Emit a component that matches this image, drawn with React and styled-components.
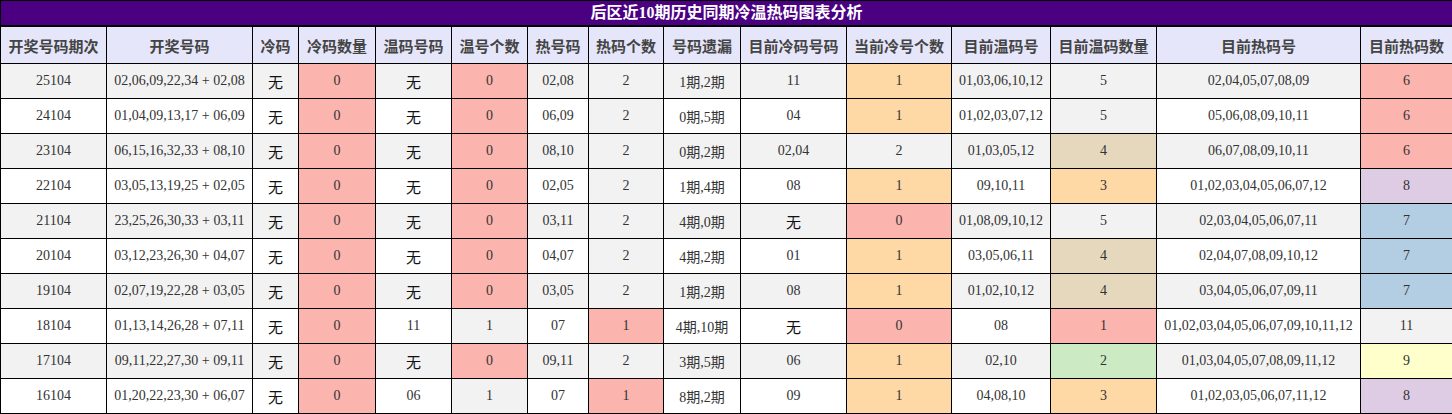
import styled, { createGlobalStyle } from "styled-components";

const GlobalStyle = createGlobalStyle`
  body {
    margin: 0;
    background: #ffffff;
    font-family: "Liberation Serif", "Noto Sans CJK SC", serif;
  }
`;

const palette = {
  red: "#fbb4ae",
  blue: "#b3cde3",
  green: "#ccebc5",
  purple: "#decbe4",
  orange: "#fed9a6",
  yellow: "#ffffcc",
  tan: "#e5d8bd",
  gray: "#f2f2f2",
};

const columns = [
  { title: "开奖号码期次", width: 106 },
  { title: "开奖号码", width: 146 },
  { title: "冷码", width: 46 },
  { title: "冷码数量", width: 77 },
  { title: "温码号码", width: 76 },
  { title: "温号个数", width: 76 },
  { title: "热号码", width: 61 },
  { title: "热码个数", width: 75 },
  { title: "号码遗漏", width: 77 },
  { title: "目前冷码号码", width: 106 },
  { title: "当前冷号个数", width: 105 },
  { title: "目前温码号", width: 99 },
  { title: "目前温码数量", width: 106 },
  { title: "目前热码号", width: 204 },
  { title: "目前热码数", width: 92 },
];

// count columns carry a colour key: [value, colour]
const rows = [
  ["25104", "02,06,09,22,34 + 02,08", "无", ["0", "red"], "无", ["0", "red"], "02,08", ["2", "gray"], "1期,2期", "11", ["1", "orange"], "01,03,06,10,12", ["5", "gray"], "02,04,05,07,08,09", ["6", "red"]],
  ["24104", "01,04,09,13,17 + 06,09", "无", ["0", "red"], "无", ["0", "red"], "06,09", ["2", "gray"], "0期,5期", "04", ["1", "orange"], "01,02,03,07,12", ["5", "gray"], "05,06,08,09,10,11", ["6", "red"]],
  ["23104", "06,15,16,32,33 + 08,10", "无", ["0", "red"], "无", ["0", "red"], "08,10", ["2", "gray"], "0期,2期", "02,04", ["2", "gray"], "01,03,05,12", ["4", "tan"], "06,07,08,09,10,11", ["6", "red"]],
  ["22104", "03,05,13,19,25 + 02,05", "无", ["0", "red"], "无", ["0", "red"], "02,05", ["2", "gray"], "1期,4期", "08", ["1", "orange"], "09,10,11", ["3", "orange"], "01,02,03,04,05,06,07,12", ["8", "purple"]],
  ["21104", "23,25,26,30,33 + 03,11", "无", ["0", "red"], "无", ["0", "red"], "03,11", ["2", "gray"], "4期,0期", "无", ["0", "red"], "01,08,09,10,12", ["5", "gray"], "02,03,04,05,06,07,11", ["7", "blue"]],
  ["20104", "03,12,23,26,30 + 04,07", "无", ["0", "red"], "无", ["0", "red"], "04,07", ["2", "gray"], "4期,2期", "01", ["1", "orange"], "03,05,06,11", ["4", "tan"], "02,04,07,08,09,10,12", ["7", "blue"]],
  ["19104", "02,07,19,22,28 + 03,05", "无", ["0", "red"], "无", ["0", "red"], "03,05", ["2", "gray"], "1期,2期", "08", ["1", "orange"], "01,02,10,12", ["4", "tan"], "03,04,05,06,07,09,11", ["7", "blue"]],
  ["18104", "01,13,14,26,28 + 07,11", "无", ["0", "red"], "11", ["1", "gray"], "07", ["1", "red"], "4期,10期", "无", ["0", "red"], "08", ["1", "red"], "01,02,03,04,05,06,07,09,10,11,12", ["11", "gray"]],
  ["17104", "09,11,22,27,30 + 09,11", "无", ["0", "red"], "无", ["0", "red"], "09,11", ["2", "gray"], "3期,5期", "06", ["1", "orange"], "02,10", ["2", "green"], "01,03,04,05,07,08,09,11,12", ["9", "yellow"]],
  ["16104", "01,20,22,23,30 + 06,07", "无", ["0", "red"], "06", ["1", "gray"], "07", ["1", "red"], "8期,2期", "09", ["1", "orange"], "04,08,10", ["3", "orange"], "01,02,03,05,06,07,11,12", ["8", "purple"]],
];

const Table = styled.table`
  width: 1452px;
  table-layout: fixed;
  border-collapse: collapse;
  border: 1px solid #000;
`;

const TitleCell = styled.th`
  height: 24px;
  padding: 0;
  background: #4b0082;
  color: #ffffff;
  font-size: 16px;
  font-weight: 700;
  text-align: center;
  border: 1px solid #000;
  border-bottom-width: 2px;
  line-height: 24px;
`;

const HeadCell = styled.th`
  height: 36px;
  padding: 0;
  background: #e6e6fa;
  color: #444444;
  font-size: 15px;
  font-weight: 700;
  text-align: center;
  white-space: nowrap;
  border: 1px solid #000;
`;

const Row = styled.tr`
  background: ${({ $odd }) => ($odd ? "#f2f2f2" : "#ffffff")};
`;

const Cell = styled.td`
  height: 34px;
  padding: 0;
  text-align: center;
  font-size: 14px;
  color: #333333;
  white-space: nowrap;
  border: 1px solid #000;
  background: ${({ $tone }) => ($tone ? palette[$tone] : "transparent")};
`;

const None = styled.span`
  color: #111111;
  font-size: 15px;
`;

const renderValue = (value) => (value === "无" ? <None>无</None> : value);

export default function App() {
  return (
    <>
      <GlobalStyle />
      <Table>
        <colgroup>
          {columns.map((col) => (
            <col key={col.title} style={{ width: col.width }} />
          ))}
        </colgroup>
        <thead>
          <tr>
            <TitleCell colSpan={columns.length}>后区近10期历史同期冷温热码图表分析</TitleCell>
          </tr>
          <tr>
            {columns.map((col) => (
              <HeadCell key={col.title}>{col.title}</HeadCell>
            ))}
          </tr>
        </thead>
        <tbody>
          {rows.map((row, i) => (
            <Row key={row[0]} $odd={i % 2 === 0}>
              {row.map((cell, j) =>
                Array.isArray(cell) ? (
                  <Cell key={j} $tone={cell[1]}>
                    {cell[0]}
                  </Cell>
                ) : (
                  <Cell key={j}>{renderValue(cell)}</Cell>
                )
              )}
            </Row>
          ))}
        </tbody>
      </Table>
    </>
  );
}
